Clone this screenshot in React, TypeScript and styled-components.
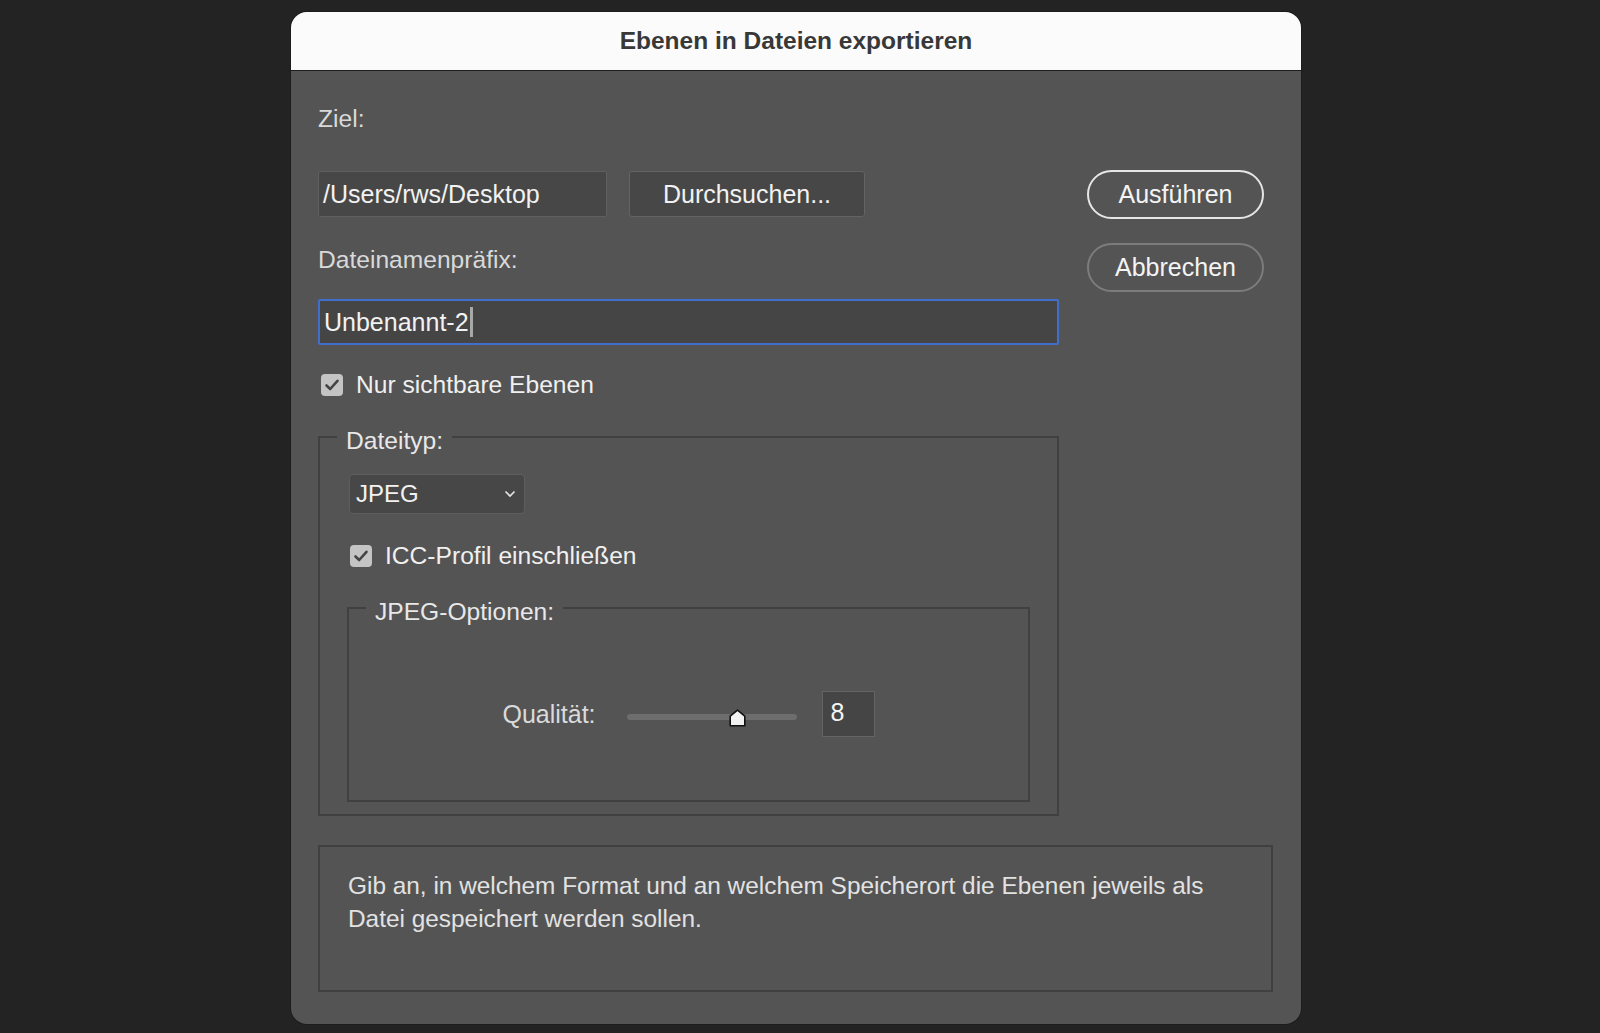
import React from 'react'
import styled, { createGlobalStyle } from 'styled-components'

const GlobalStyle = createGlobalStyle`
  html, body {
    margin: 0;
    padding: 0;
    background: #232323;
  }
  body {
    font-family: "Liberation Sans", Arial, sans-serif;
  }
`

const App = () => {
  return (
    <>
      <GlobalStyle />
      <Screen>
        <Dialog>
          <TitleBar>Ebenen in Dateien exportieren</TitleBar>
          <Body>
            <Top>
              <Form>
                <Label>Ziel:</Label>
                <PathRow>
                  <PathField>/Users/rws/Desktop</PathField>
                  <BrowseButton>Durchsuchen...</BrowseButton>
                </PathRow>
                <Label $gap={29}>Dateinamenpräfix:</Label>
                <PrefixField>
                  Unbenannt-2<Caret />
                </PrefixField>
                <CheckRow $gap={26}>
                  <CheckMark />
                  <CheckLabel>Nur sichtbare Ebenen</CheckLabel>
                </CheckRow>

                <Group $outer>
                  <Legend $offset={-12}>Dateityp:</Legend>
                  <Select>
                    <span>JPEG</span>
                    <svg width="12" height="8" viewBox="0 0 12 8">
                      <polyline points="1.5,1.5 6,6 10.5,1.5" fill="none" stroke="#e6e6e6" strokeWidth="1.6" />
                    </svg>
                  </Select>
                  <CheckRow $gap={28} $indent={1}>
                    <CheckMark />
                    <CheckLabel>ICC-Profil einschließen</CheckLabel>
                  </CheckRow>

                  <Group>
                    <Legend $offset={17}>JPEG-Optionen:</Legend>
                    <QualityRow>
                      <QualityLabel>Qualität:</QualityLabel>
                      <Slider>
                        <Track />
                        <Thumb style={{ left: `${(8 / 12) * 100}%` }}>
                          <svg width="17" height="18" viewBox="0 0 17 18">
                            <polygon points="8.5,1.2 15.8,7.2 15.8,16.8 1.2,16.8 1.2,7.2" fill="#f2f2f2" stroke="#111" strokeWidth="1.6" strokeLinejoin="round" />
                          </svg>
                        </Thumb>
                      </Slider>
                      <ValueBox>8</ValueBox>
                    </QualityRow>
                  </Group>
                </Group>
              </Form>

              <Actions>
                <PillButton $primary>Ausführen</PillButton>
                <PillButton>Abbrechen</PillButton>
              </Actions>
            </Top>

            <Description>
              Gib an, in welchem Format und an welchem Speicherort die Ebenen jeweils als
              <br />
              Datei gespeichert werden sollen.
            </Description>
          </Body>
        </Dialog>
      </Screen>
    </>
  )
}

const CheckMark: React.FC = () => (
  <CheckBox>
    <svg width="16" height="14" viewBox="0 0 16 14">
      <polyline points="2.5,7.5 6.2,11 13.5,2.8" fill="none" stroke="#444" strokeWidth="2.6" strokeLinecap="round" strokeLinejoin="round" />
    </svg>
  </CheckBox>
)

const Screen = styled.div`
  width: 1600px;
  height: 1033px;
  padding: 12px 0 0 291px;
  box-sizing: border-box;
  background: #232323;
`

const Dialog = styled.div`
  width: 1010px;
  height: 1012px;
  display: flex;
  flex-direction: column;
  background: #545454;
  border-radius: 16px;
  overflow: hidden;
  box-shadow: 0 0 0 1px #1c1c1c;
`

const TitleBar = styled.div`
  height: 58px;
  flex-shrink: 0;
  display: flex;
  align-items: center;
  justify-content: center;
  background: #fbfbfb;
  border-bottom: 1px solid #1e1e1e;
  color: #383838;
  font-size: 24.5px;
  font-weight: 700;
`

const Body = styled.div`
  padding: 34px 28px 0 27px;
  display: flex;
  flex-direction: column;
`

const Top = styled.div`
  display: grid;
  grid-template-columns: 741px 1fr;
`

const Form = styled.div`
  display: flex;
  flex-direction: column;
`

const Label = styled.div<{ $gap?: number }>`
  margin-top: ${p => p.$gap ?? 0}px;
  height: 28px;
  line-height: 28px;
  font-size: 24.6px;
  color: #d9d9d9;
`

const PathRow = styled.div`
  margin-top: 38px;
  display: flex;
  gap: 22px;
`

const FieldBase = styled.div`
  height: 46px;
  box-sizing: border-box;
  display: flex;
  align-items: center;
  background: #474747;
  border: 1px solid #5f5f5f;
  border-radius: 2px;
  color: #f2f2f2;
  font-size: 25px;
`

const PathField = styled(FieldBase)`
  width: 289px;
  padding-left: 4px;
`

const BrowseButton = styled(FieldBase)`
  width: 236px;
  justify-content: center;
  border-radius: 3px;
  border-color: #636363;
`

const PrefixField = styled(FieldBase)`
  margin-top: 25px;
  width: 741px;
  padding-left: 4px;
  border: 2px solid #3f6fcc;
  background: #454545;
`

const Caret = styled.span`
  display: inline-block;
  width: 3px;
  height: 30px;
  margin-left: 1px;
  background: #a8a8a8;
`

const CheckRow = styled.div<{ $gap?: number; $indent?: number }>`
  margin-top: ${p => p.$gap ?? 0}px;
  margin-left: ${p => p.$indent ?? 3}px;
  display: flex;
  align-items: center;
  gap: 13px;
  height: 28px;
`

const CheckBox = styled.span`
  width: 22px;
  height: 22px;
  flex-shrink: 0;
  display: flex;
  align-items: center;
  justify-content: center;
  background: #c4c4c4;
  border-radius: 4px;
`

const CheckLabel = styled.span`
  font-size: 24.6px;
  color: #f0f0f0;
`

const Group = styled.fieldset<{ $outer?: boolean }>`
  margin: ${p => (p.$outer ? '20px 0 0 0' : '20px 0 0 -2px')};
  padding: ${p => (p.$outer ? '0 27px 12px 29px' : '0')};
  ${p => (p.$outer ? '' : 'height: 212px;')}
  box-sizing: border-box;
  border: 2px solid #404040;
  border-radius: 0;
  display: flex;
  flex-direction: column;
  align-items: flex-start;
  min-width: 0;
  ${p => (p.$outer ? 'width: 741px;' : 'width: 683px; align-self: stretch;')}
`

const Legend = styled.legend<{ $offset: number }>`
  margin-left: ${p => p.$offset}px;
  padding: 8px 9px 0;
  height: 36px;
  box-sizing: border-box;
  line-height: 28px;
  font-size: 24.6px;
  color: #e8e8e8;
`

const Select = styled.div`
  margin-top: 19px;
  width: 176px;
  height: 40px;
  box-sizing: border-box;
  padding: 0 8px 0 6px;
  display: flex;
  align-items: center;
  justify-content: space-between;
  background: #474747;
  border: 1px solid #5e5e5e;
  border-radius: 4px;
  color: #f2f2f2;
  font-size: 24px;
`

const QualityRow = styled.div`
  align-self: center;
  margin-top: 65px;
  display: flex;
  align-items: center;
`

const QualityLabel = styled.span`
  font-size: 25px;
  color: #dadada;
  margin-right: 31px;
`

const Slider = styled.div`
  position: relative;
  width: 170px;
  height: 18px;
  margin: 5px 25px 0 0;
  display: flex;
  align-items: center;
`

const Track = styled.div`
  width: 100%;
  height: 6px;
  border-radius: 3px;
  background: #6d6d6d;
`

const Thumb = styled.div`
  position: absolute;
  top: 1px;
  margin-left: -11px;
  width: 17px;
  height: 18px;
  display: flex;
`

const ValueBox = styled.div`
  width: 53px;
  height: 46px;
  box-sizing: border-box;
  padding: 0 0 4px 8px;
  display: flex;
  align-items: center;
  background: #454545;
  border: 1px solid #646464;
  color: #f4f4f4;
  font-size: 25px;
`

const Actions = styled.div`
  padding: 65px 9px 0 0;
  display: flex;
  flex-direction: column;
  align-items: flex-end;
  gap: 24px;
`

const PillButton = styled.div<{ $primary?: boolean }>`
  width: 177px;
  height: 49px;
  box-sizing: border-box;
  display: flex;
  align-items: center;
  justify-content: center;
  border: 2px solid ${p => (p.$primary ? '#e6e6e6' : '#7c7c7c')};
  border-radius: 25px;
  color: #f4f4f4;
  font-size: 25px;
`

const Description = styled.div`
  margin-top: 29px;
  height: 147px;
  box-sizing: border-box;
  padding: 22px 20px 0 28px;
  border: 2px solid #404040;
  color: #e2e2e2;
  font-size: 24.4px;
  line-height: 33px;
`

export default App
